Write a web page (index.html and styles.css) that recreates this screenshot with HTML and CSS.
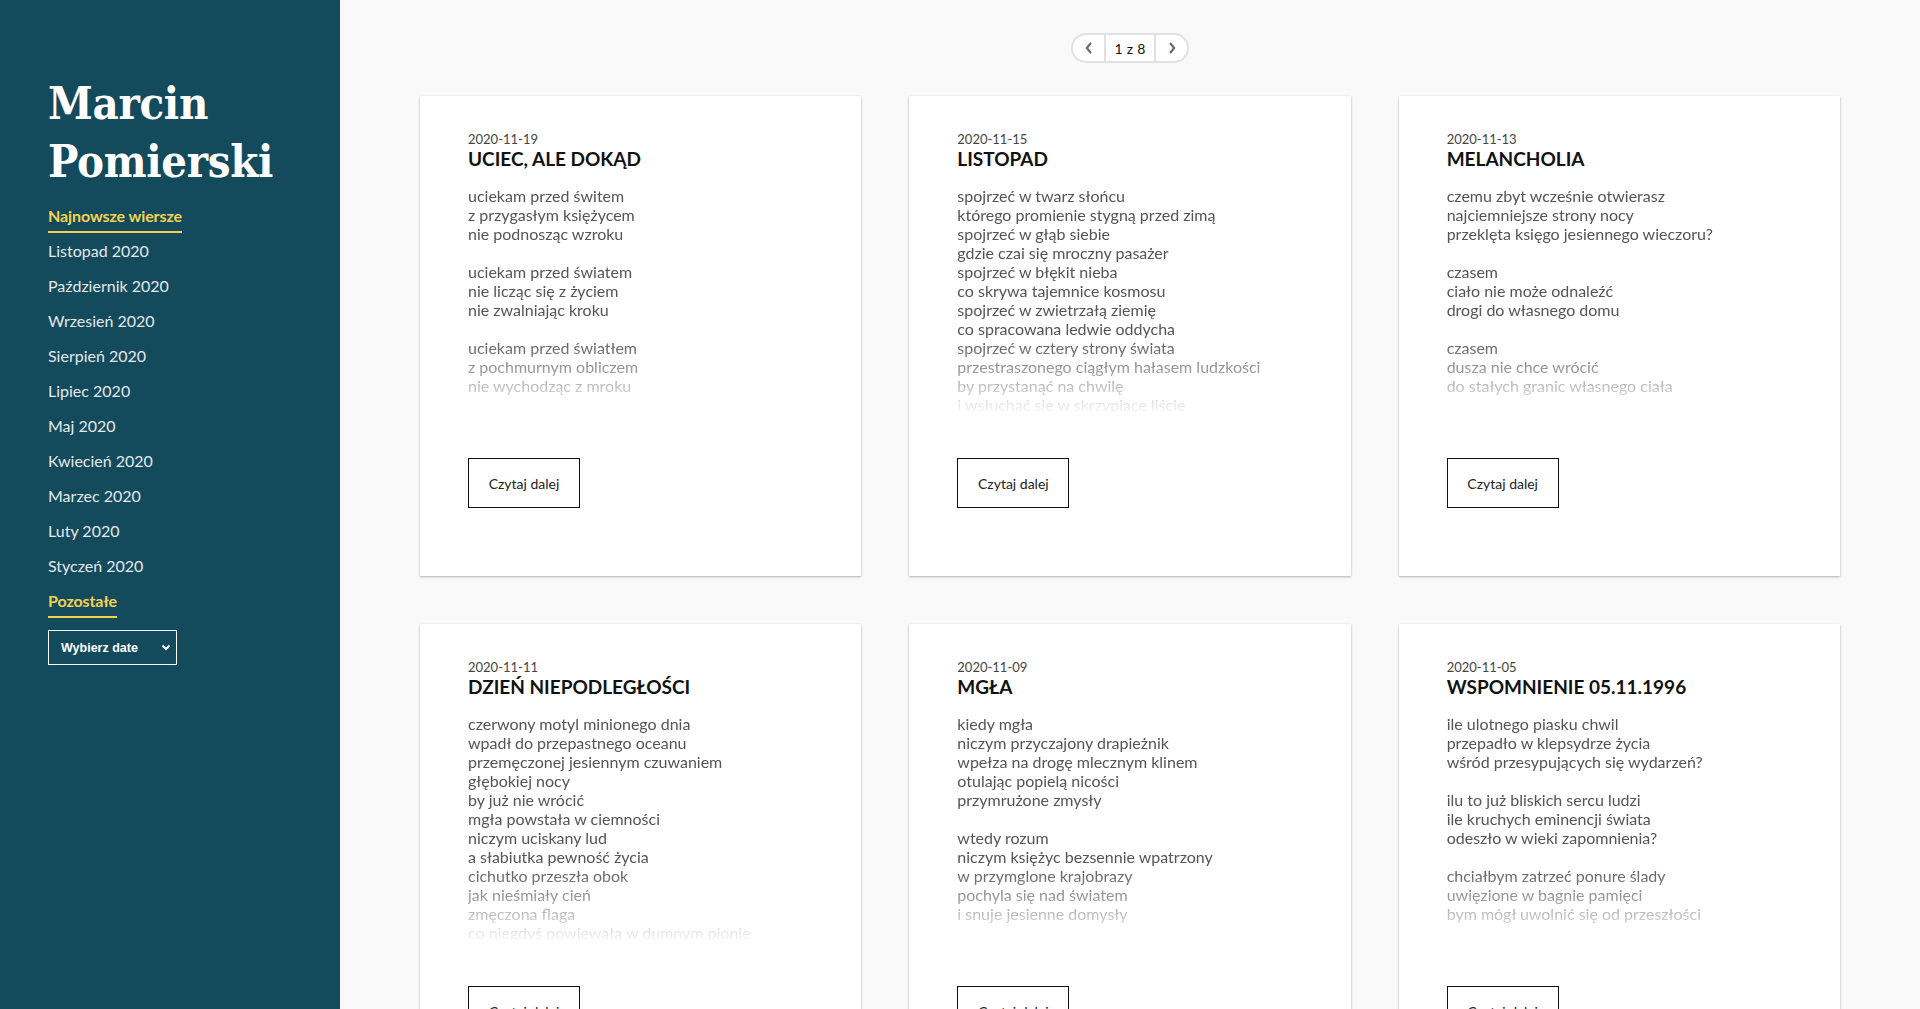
FILE: index.html
```html
<!DOCTYPE html>
<html lang="pl">
<head>
<meta charset="utf-8">
<title>Marcin Pomierski</title>
<link rel="stylesheet" href="styles.css">
</head>
<body>
<aside class="sidebar">
  <h1 class="brand">Marcin<br>Pomierski</h1>
  <nav class="nav">
    <div class="nav-row"><span class="nav-head">Najnowsze wiersze</span></div>
    <div class="nav-row"><a class="nav-link" href="#">Listopad 2020</a></div>
    <div class="nav-row"><a class="nav-link" href="#">Październik 2020</a></div>
    <div class="nav-row"><a class="nav-link" href="#">Wrzesień 2020</a></div>
    <div class="nav-row"><a class="nav-link" href="#">Sierpień 2020</a></div>
    <div class="nav-row"><a class="nav-link" href="#">Lipiec 2020</a></div>
    <div class="nav-row"><a class="nav-link" href="#">Maj 2020</a></div>
    <div class="nav-row"><a class="nav-link" href="#">Kwiecień 2020</a></div>
    <div class="nav-row"><a class="nav-link" href="#">Marzec 2020</a></div>
    <div class="nav-row"><a class="nav-link" href="#">Luty 2020</a></div>
    <div class="nav-row"><a class="nav-link" href="#">Styczeń 2020</a></div>
    <div class="nav-row"><span class="nav-head">Pozostałe</span></div>
  </nav>
  <div class="date-select">
    <span>Wybierz date</span>
    <svg class="date-chev" width="10" height="7" viewBox="0 0 10 7"><path d="M1.5 1.5 L5 5 L8.5 1.5" fill="none" stroke="#fff" stroke-width="2"/></svg>
  </div>
</aside>

<main class="main">
  <div class="pager-wrap">
    <div class="pager">
      <span class="pager-btn"><svg width="8" height="12" viewBox="0 0 8 12"><path d="M6 1 L1.8 6 L6 11" fill="none" stroke="#666" stroke-width="2"/></svg></span>
      <span class="pager-num">1 z 8</span>
      <span class="pager-btn"><svg width="8" height="12" viewBox="0 0 8 12"><path d="M2 1 L6.2 6 L2 11" fill="none" stroke="#666" stroke-width="2"/></svg></span>
    </div>
  </div>

  <section class="grid">
    <article class="card">
      <div class="date">2020-11-19</div>
      <h2 class="title">UCIEC, ALE DOKĄD</h2>
      <p class="poem">uciekam przed świtem<br>z przygasłym księżycem<br>nie podnosząc wzroku<br><br>uciekam przed światem<br>nie licząc się z życiem<br>nie zwalniając kroku<br><br>uciekam przed światłem<br>z pochmurnym obliczem<br>nie wychodząc z mroku</p>
      <a class="more" href="#">Czytaj dalej</a>
    </article>

    <article class="card">
      <div class="date">2020-11-15</div>
      <h2 class="title">LISTOPAD</h2>
      <p class="poem">spojrzeć w twarz słońcu<br>którego promienie stygną przed zimą<br>spojrzeć w głąb siebie<br>gdzie czai się mroczny pasażer<br>spojrzeć w błękit nieba<br>co skrywa tajemnice kosmosu<br>spojrzeć w zwietrzałą ziemię<br>co spracowana ledwie oddycha<br>spojrzeć w cztery strony świata<br>przestraszonego ciągłym hałasem ludzkości<br>by przystanąć na chwilę<br>i wsłuchać się w skrzypiące liście</p>
      <a class="more" href="#">Czytaj dalej</a>
    </article>

    <article class="card">
      <div class="date">2020-11-13</div>
      <h2 class="title">MELANCHOLIA</h2>
      <p class="poem">czemu zbyt wcześnie otwierasz<br>najciemniejsze strony nocy<br>przeklęta księgo jesiennego wieczoru?<br><br>czasem<br>ciało nie może odnaleźć<br>drogi do własnego domu<br><br>czasem<br>dusza nie chce wrócić<br>do stałych granic własnego ciała</p>
      <a class="more" href="#">Czytaj dalej</a>
    </article>

    <article class="card">
      <div class="date">2020-11-11</div>
      <h2 class="title">DZIEŃ NIEPODLEGŁOŚCI</h2>
      <p class="poem">czerwony motyl minionego dnia<br>wpadł do przepastnego oceanu<br>przemęczonej jesiennym czuwaniem<br>głębokiej nocy<br>by już nie wrócić<br>mgła powstała w ciemności<br>niczym uciskany lud<br>a słabiutka pewność życia<br>cichutko przeszła obok<br>jak nieśmiały cień<br>zmęczona flaga<br>co niegdyś powiewała w dumnym pionie</p>
      <a class="more" href="#">Czytaj dalej</a>
    </article>

    <article class="card">
      <div class="date">2020-11-09</div>
      <h2 class="title">MGŁA</h2>
      <p class="poem">kiedy mgła<br>niczym przyczajony drapieżnik<br>wpełza na drogę mlecznym klinem<br>otulając popielą nicości<br>przymrużone zmysły<br><br>wtedy rozum<br>niczym księżyc bezsennie wpatrzony<br>w przymglone krajobrazy<br>pochyla się nad światem<br>i snuje jesienne domysły</p>
      <a class="more" href="#">Czytaj dalej</a>
    </article>

    <article class="card">
      <div class="date">2020-11-05</div>
      <h2 class="title">WSPOMNIENIE 05.11.1996</h2>
      <p class="poem">ile ulotnego piasku chwil<br>przepadło w klepsydrze życia<br>wśród przesypujących się wydarzeń?<br><br>ilu to już bliskich sercu ludzi<br>ile kruchych eminencji świata<br>odeszło w wieki zapomnienia?<br><br>chciałbym zatrzeć ponure ślady<br>uwięzione w bagnie pamięci<br>bym mógł uwolnić się od przeszłości</p>
      <a class="more" href="#">Czytaj dalej</a>
    </article>
  </section>
</main>
</body>
</html>
```

FILE: styles.css
```css
* { box-sizing: border-box; }

html, body {
  margin: 0;
  padding: 0;
}

body {
  display: flex;
  min-height: 100vh;
  font-family: Lato, "Open Sans", sans-serif;
  background: #f9f9fa;
}

/* ---------- Sidebar ---------- */
.sidebar {
  flex: 0 0 340px;
  width: 340px;
  background: #134a5c;
  padding: 75px 0 0 48px;
}

.brand {
  margin: 0;
  font-family: "DejaVu Serif Condensed", "DejaVu Serif", "Liberation Serif", serif;
  font-weight: 700;
  font-size: 45px;
  line-height: 58px;
  color: #ffffff;
  letter-spacing: -0.3px;
}

.nav {
  margin-top: 8px;
}

.nav-row {
  height: 35px;
  display: flex;
  align-items: flex-start;
  padding-top: 7px;
}

.nav-head {
  display: inline-block;
  font-weight: 700;
  font-size: 16px;
  line-height: 20px;
  color: #f3d250;
  padding-bottom: 5px;
  border-bottom: 2px solid #f3d250;
  letter-spacing: -0.1px;
}

.nav-link {
  font-size: 16px;
  line-height: 20px;
  color: #e3e9ec;
  text-decoration: none;
}

.date-select {
  margin-top: 11px;
  width: 129px;
  height: 35px;
  border: 1px solid #ffffff;
  display: flex;
  align-items: center;
  justify-content: space-between;
  padding: 0 5px 0 12px;
  color: #ffffff;
  font-family: "Liberation Sans", Arial, sans-serif;
  font-weight: 700;
  font-size: 12.5px;
}

.date-chev {
  display: block;
}

/* ---------- Main ---------- */
.main {
  flex: 1;
  padding: 33px 80px 60px;
}

.pager-wrap {
  display: flex;
  justify-content: center;
}

.pager {
  display: flex;
  height: 30px;
  border: 2px solid #e1e1e3;
  border-radius: 16px;
  background: #ffffff;
  overflow: hidden;
}

.pager-btn {
  width: 31px;
  display: flex;
  align-items: center;
  justify-content: center;
}

.pager-btn svg { display: block; }

.pager-num {
  width: 52px;
  border-left: 2px solid #e1e1e3;
  border-right: 2px solid #e1e1e3;
  display: flex;
  align-items: center;
  justify-content: center;
  font-size: 14px;
  color: #111;
  letter-spacing: 0.3px;
}

.grid {
  margin-top: 33px;
  display: grid;
  grid-template-columns: repeat(3, 1fr);
  gap: 48px;
}

.card {
  background: #ffffff;
  height: 480px;
  padding: 35px 48px 0;
  box-shadow: 0 1px 2px rgba(0, 0, 0, 0.28), 0 0 2px rgba(0, 0, 0, 0.06);
}

.date {
  font-size: 13px;
  line-height: 16px;
  color: #444;
}

.title {
  margin: 0;
  font-size: 19px;
  line-height: 24px;
  font-weight: 700;
  color: #111;
}

.poem {
  margin: 15px 0 0;
  height: 226px;
  overflow: hidden;
  font-size: 16px;
  line-height: 19px;
  color: #555;
  -webkit-mask-image: linear-gradient(to bottom, #000 0, #000 152px, rgba(0,0,0,0.06) 226px);
  mask-image: linear-gradient(to bottom, #000 0, #000 152px, rgba(0,0,0,0.06) 226px);
}

.more {
  display: flex;
  align-items: center;
  justify-content: center;
  margin-top: 46px;
  width: 112px;
  height: 50px;
  border: 1px solid #111;
  font-size: 14px;
  color: #222;
  text-decoration: none;
}
```
